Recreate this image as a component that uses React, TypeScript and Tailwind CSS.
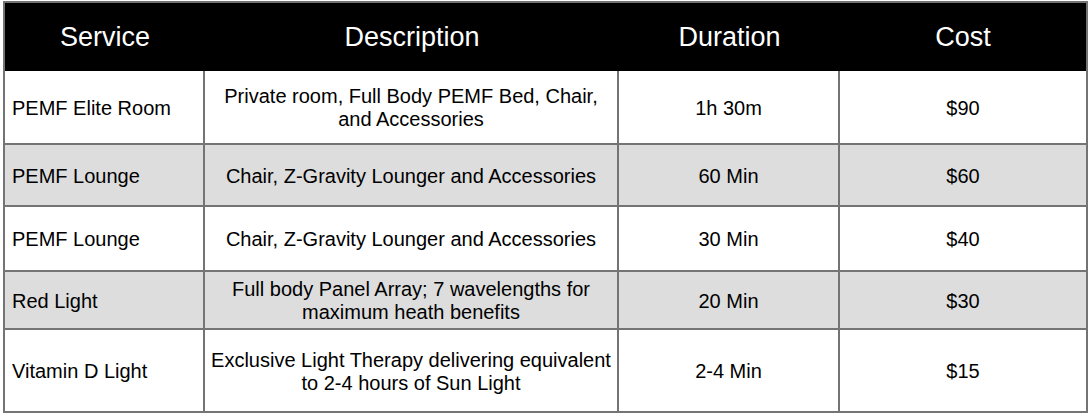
const rows = [
  { service: 'PEMF Elite Room', description: ['Private room, Full Body PEMF Bed, Chair,', 'and Accessories'], duration: '1h 30m', cost: '$90', h: 'h-[74px]', shade: false },
  { service: 'PEMF Lounge', description: ['Chair, Z-Gravity Lounger and Accessories'], duration: '60 Min', cost: '$60', h: 'h-[62px]', shade: true },
  { service: 'PEMF Lounge', description: ['Chair, Z-Gravity Lounger and Accessories'], duration: '30 Min', cost: '$40', h: 'h-[65px]', shade: false },
  { service: 'Red Light', description: ['Full body Panel Array; 7 wavelengths for', 'maximum heath benefits'], duration: '20 Min', cost: '$30', h: 'h-[58px]', shade: true },
  { service: 'Vitamin D Light', description: ['Exclusive Light Therapy delivering equivalent', 'to 2-4 hours of Sun Light'], duration: '2-4 Min', cost: '$15', h: 'h-[81px]', shade: false },
]

export default function App() {
  return (
    <div className="w-[1091px] h-[419px] bg-white pl-[3px] pt-[1px] font-['Liberation_Sans',Arial,sans-serif]">
      <div className="w-[1085px] border-2 border-[#747474]">
        <div className="grid grid-cols-[200px_414px_221px_1fr] h-[68px] bg-black text-white text-[27px]">
          <div className="flex items-center justify-center">Service</div>
          <div className="flex items-center justify-center">Description</div>
          <div className="flex items-center justify-center">Duration</div>
          <div className="flex items-center justify-center">Cost</div>
        </div>
        {rows.map((r, i) => (
          <div
            key={i}
            className={`grid grid-cols-[200px_414px_221px_1fr] ${r.h} ${i < rows.length - 1 ? 'border-b-2' : ''} border-[#747474] ${r.shade ? 'bg-[#dddddd]' : 'bg-white'} text-[20px] leading-[23px] text-black`}
          >
            <div className="flex items-center pl-[7px] pt-[2px] border-r-2 border-[#747474]">{r.service}</div>
            <div className="flex flex-col items-center justify-center pt-[2px] text-center border-r-2 border-[#747474]">
              {r.description.map((line, j) => (
                <span key={j}>{line}</span>
              ))}
            </div>
            <div className="flex items-center justify-center pt-[2px] border-r-2 border-[#747474]">{r.duration}</div>
            <div className="flex items-center justify-center pt-[2px]">{r.cost}</div>
          </div>
        ))}
      </div>
    </div>
  )
}
